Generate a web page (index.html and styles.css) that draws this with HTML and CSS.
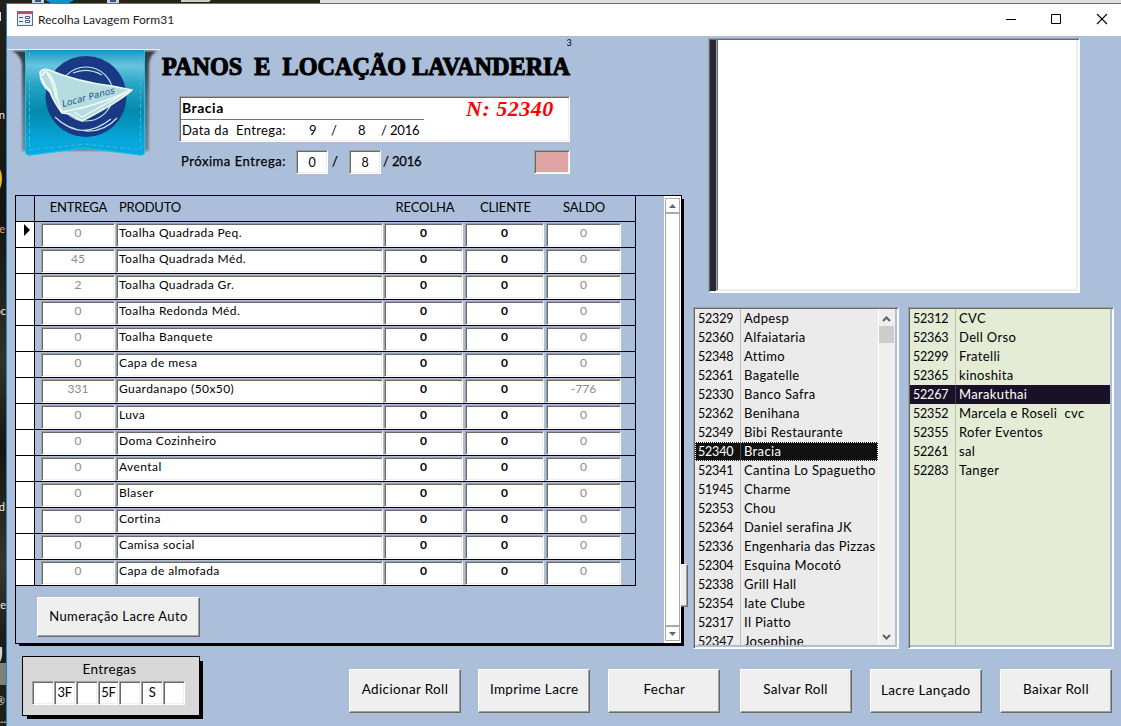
FILE: index.html
```
<!DOCTYPE html>
<html lang="pt-BR">
<head>
<meta charset="utf-8">
<title>Recolha Lavagem Form31</title>
<link rel="stylesheet" href="styles.css">
</head>
<body>
<div class="desktop">
  <svg class="desk-top" width="1121" height="3" viewBox="0 0 1121 3"><path d="M320 0H1121V3H320z" fill="#dedede"/><path d="M32 0h12v3H32zM107 0h12v3h-12z" fill="#c9d3df"/><path d="M35 0h6v2h-6zM110 0h6v2h-6z" fill="#2a5691"/><path d="M45 0h29l-5 3H51z" fill="#0f93cb"/><path d="M181 0h30l-2 2h-28z" fill="#ccc"/></svg>
  <svg class="desk-left" width="6" height="723" viewBox="0 0 6 723"><path d="M0 9h1v9H0z" fill="#c9efd9"/><path d="M0 166q4 9 0 20z" fill="#e9bb28"/><path d="M0 644h2q1 10-2 15z" fill="#c8d2dc"/><path d="M0 660h6v22H0z" fill="#7d8179"/></svg>
  <div class="desk-labels"><span>n</span><span>e</span><span>oc</span><span>d</span><span>ce</span><span>®</span><span>...</span></div>
  <div class="window">
    <header class="titlebar">
      <svg class="form-icon" width="16" height="16" viewBox="0 0 16 16"><rect x=".5" y=".5" width="15" height="14" fill="#e9edf7" stroke="#526a9c"/><path d="M0 0h16v3H0z" fill="#b0526e"/><path d="M2 6.500h4M2 10.500h4" stroke="#46588a"/><path d="M8.500 5.500h4v2h-4zM8.500 9.500h4v2h-4z" fill="#fff" stroke="#46588a"/></svg>
      <h1 class="caption">Recolha Lavagem Form31</h1>
      <svg class="controls" width="105" height="12" viewBox="0 0 105 12" fill="none" stroke="#000"><path d="M1 6.500h10M46.500 1.500h9v9h-9z"/><path d="M92 1l10 10M102 1L92 11" stroke-width="1.100"/></svg>
    </header>
    <main class="client">
      <div class="upper">
        <section class="left">
          <div class="head">
            <svg class="logo" width="153" height="112" viewBox="7 48 153 112">
              <defs>
                <linearGradient id="ribbon" x1="0" y1="0" x2="0" y2="1"><stop offset="0" stop-color="#1597c2"/><stop offset=".15" stop-color="#67c5df"/><stop offset=".32" stop-color="#27a6c6"/><stop offset=".58" stop-color="#0489ac"/><stop offset=".85" stop-color="#06a6da"/><stop offset="1" stop-color="#05a9e2"/></linearGradient>
                <linearGradient id="shade" x1="0" y1="0" x2="0" y2="1"><stop offset="0" stop-color="#34373d"/><stop offset=".5" stop-color="#5f6a7b"/><stop offset="1" stop-color="#77859c"/></linearGradient>
                <filter id="soft" x="-10%" y="-10%" width="120%" height="120%"><feGaussianBlur stdDeviation="1.300"/></filter>
              </defs>
              <path d="M11 51H157Q150 54 149 64V151H22V64Q20 53 11 51z" fill="url(#shade)" filter="url(#soft)"/>
              <path d="M7 49.500H160" stroke="#e6edf3"/>
              <path d="M25 50H145V152Q144 156 139 155L85 148 31 155Q26 156 25 152z" fill="url(#ribbon)"/>
              <path d="M25.500 50V152Q27 156 31 155L85 148 139 155Q144 156 144.500 152V50" fill="none" stroke="#0cc8ea"/>
              <path d="M29.500 52V150L85 144 140.500 150V52" fill="none" stroke="#55bfd8" stroke-width=".8" stroke-dasharray="4 3"/>
              <circle cx="86" cy="96.500" r="40.500" fill="#193985"/>
              <g fill="none" stroke="#c5e4ea" stroke-width="1.200"><circle cx="86" cy="94" r="27"/><path d="M73 73Q87 67 102 75M55 117Q68 130 86 131T117 118M61 122Q84 140 111 119"/></g>
              <path d="M40 72Q43 68 49 70 78 82 112 86L132 90Q119 102 82 121L70 114 62 113Q54 102 50 92 40 84 40 72z" fill="#b5dddf" stroke="#f0fafa" stroke-width="1.700" stroke-linejoin="round"/>
              <path d="M42 76Q45 68 50 75 56 83 57 98L62 112Q98 106 131 90L82 117 74 112M42 78Q45 87 51 91M47 73Q53 82 56 98" fill="none" stroke="#f0fafa" stroke-width="1.400"/>
              <text x="63" y="107" transform="rotate(-15 63 107)" class="logo-name" textLength="54" lengthAdjust="spacingAndGlyphs">Locar Panos</text>
            </svg>
            <div class="ident">
              <div class="mini">3</div>
              <svg class="brand" width="412" height="32" viewBox="0 0 412 32"><text x="2" y="27" textLength="408" lengthAdjust="spacingAndGlyphs" xml:space="preserve">PANOS  E  LOCAÇÃO LAVANDERIA</text></svg>
              <div class="customer sunken">
                <div class="who"><b class="name">Bracia</b><div class="date"><span class="lbl">Data da&nbsp; Entrega:</span><span class="day">9</span><span class="sl">/</span><span class="month">8</span><span class="year">/ 2016</span></div></div>
                <div class="number">N: 52340</div>
              </div>
              <div class="next"><span class="next-lbl">Próxima Entrega:</span><span class="inp sunken">0</span><span class="next-sl">/</span><span class="inp sunken">8</span><span class="next-year">/ 2016</span><span class="flag sunken"></span></div>
            </div>
          </div>
          <div class="subform">
            <div class="sub-main">
              <div class="grid">
                <div class="row labels"><i></i><span>ENTREGA</span><span class="l">PRODUTO</span><span>RECOLHA</span><span>CLIENTE</span><span>SALDO</span></div>
                <div class="row"><i><svg width="6" height="12" viewBox="0 0 6 12"><path d="M0 0l6 6-6 6z"/></svg></i><span>0</span><span>Toalha Quadrada Peq.</span><span>0</span><span>0</span><span>0</span></div>
                <div class="row"><i></i><span>45</span><span>Toalha Quadrada Méd.</span><span>0</span><span>0</span><span>0</span></div>
                <div class="row"><i></i><span>2</span><span>Toalha Quadrada Gr.</span><span>0</span><span>0</span><span>0</span></div>
                <div class="row"><i></i><span>0</span><span>Toalha Redonda Méd.</span><span>0</span><span>0</span><span>0</span></div>
                <div class="row"><i></i><span>0</span><span>Toalha Banquete</span><span>0</span><span>0</span><span>0</span></div>
                <div class="row"><i></i><span>0</span><span>Capa de mesa</span><span>0</span><span>0</span><span>0</span></div>
                <div class="row"><i></i><span>331</span><span>Guardanapo (50x50)</span><span>0</span><span>0</span><span>-776</span></div>
                <div class="row"><i></i><span>0</span><span>Luva</span><span>0</span><span>0</span><span>0</span></div>
                <div class="row"><i></i><span>0</span><span>Doma Cozinheiro</span><span>0</span><span>0</span><span>0</span></div>
                <div class="row"><i></i><span>0</span><span>Avental</span><span>0</span><span>0</span><span>0</span></div>
                <div class="row"><i></i><span>0</span><span>Blaser</span><span>0</span><span>0</span><span>0</span></div>
                <div class="row"><i></i><span>0</span><span>Cortina</span><span>0</span><span>0</span><span>0</span></div>
                <div class="row"><i></i><span>0</span><span>Camisa social</span><span>0</span><span>0</span><span>0</span></div>
                <div class="row"><i></i><span>0</span><span>Capa de almofada</span><span>0</span><span>0</span><span>0</span></div>
              </div>
              <button class="btn auto">Numeração Lacre Auto</button>
            </div>
            <div class="scroll"><div class="arrow"><svg width="7" height="4" viewBox="0 0 7 4"><path d="M0 4L3.500 0 7 4z"/></svg></div><div class="track"></div><div class="arrow"><svg width="7" height="4" viewBox="0 0 7 4"><path d="M0 0L3.500 4 7 0z"/></svg></div></div>
            <div class="tab"></div>
          </div>
        </section>
        <section class="right">
          <div class="memo sunken"><div class="memo-bar"></div><div class="memo-text sunken"></div></div>
          <div class="lists">
            <div class="list sunken">
              <div class="items">
                <div><span>52329</span><span>Adpesp</span></div><div><span>52360</span><span>Alfaiataria</span></div><div><span>52348</span><span>Attimo</span></div><div><span>52361</span><span>Bagatelle</span></div><div><span>52330</span><span>Banco Safra</span></div><div><span>52362</span><span>Benihana</span></div><div><span>52349</span><span>Bibi Restaurante</span></div><div class="sel focus"><span>52340</span><span>Bracia</span></div><div><span>52341</span><span>Cantina Lo Spaguetho</span></div><div><span>51945</span><span>Charme</span></div><div><span>52353</span><span>Chou</span></div><div><span>52364</span><span>Daniel serafina JK</span></div><div><span>52336</span><span>Engenharia das Pizzas</span></div><div><span>52304</span><span>Esquina Mocotó</span></div><div><span>52338</span><span>Grill Hall</span></div><div><span>52354</span><span>Iate Clube</span></div><div><span>52317</span><span>Il Piatto</span></div><div><span>52347</span><span>Josephine</span></div>
              </div>
              <div class="list-scroll"><svg width="9" height="6" viewBox="0 0 9 6"><path d="M1 5l3.500-3.500L8 5"/></svg><div class="thumb"></div><svg class="down" width="9" height="6" viewBox="0 0 9 6"><path d="M1 1l3.500 3.500L8 1"/></svg></div>
            </div>
            <div class="list green sunken">
              <div class="items">
                <div><span>52312</span><span>CVC</span></div><div><span>52363</span><span>Dell Orso</span></div><div><span>52299</span><span>Fratelli</span></div><div><span>52365</span><span>kinoshita</span></div><div class="sel"><span>52267</span><span>Marakuthai</span></div><div><span>52352</span><span>Marcela e Roseli&nbsp; cvc</span></div><div><span>52355</span><span>Rofer Eventos</span></div><div><span>52261</span><span>sal</span></div><div><span>52283</span><span>Tanger</span></div><div class="rest"><span></span><span></span></div>
              </div>
            </div>
          </div>
        </section>
      </div>
      <footer class="bottom">
        <div class="deliveries"><div class="del-title">Entregas</div><div class="days"><span></span><span>3F</span><span></span><span>5F</span><span></span><span>S</span><span></span></div></div>
        <nav class="actions"><button class="btn">Adicionar Roll</button><button class="btn">Imprime Lacre</button><button class="btn">Fechar</button><button class="btn">Salvar Roll</button><button class="btn low">Lacre Lançado</button><button class="btn">Baixar Roll</button></nav>
      </footer>
    </main>
  </div>
</div>
</body>
</html>
```
FILE: styles.css
```
* { box-sizing: border-box; }
body { margin: 0; width: 1121px; height: 726px; overflow: hidden; font: 13px/19px Lato, "Liberation Sans", sans-serif; font-variant-ligatures: none; letter-spacing: .35px; color: #000; }
svg { display: block; flex: none; }
.desktop { position: relative; width: 1121px; height: 726px; padding: 3px 0 0 6px; background: linear-gradient(#23231b, #15140f 30%, #30332a 50%, #17140f 62%, #39362d 78%, #1d1c17 88%, #22201b); }
.desk-top { position: absolute; left: 0; top: 0; }
.desk-left { position: absolute; left: 0; top: 3px; }
.desk-labels { position: absolute; left: 0; top: 0; width: 6px; height: 726px; overflow: hidden; color: #eee; font-size: 11px; line-height: 14px; letter-spacing: 0; }
.desk-labels span { position: absolute; right: 1px; }
.desk-labels span:nth-child(1) { top: 108px; }
.desk-labels span:nth-child(2) { top: 222px; color: #e79d72; }
.desk-labels span:nth-child(3) { top: 304px; right: 0; }
.desk-labels span:nth-child(4) { top: 500px; }
.desk-labels span:nth-child(5) { top: 598px; right: 0; }
.desk-labels span:nth-child(6) { top: 694px; }
.desk-labels span:nth-child(7) { top: 712px; right: 0; }
.window { display: flex; flex-direction: column; height: 723px; border: solid #2583c6; border-width: 1px 0 0 1px; background: #acbfda; }
.titlebar { display: flex; align-items: center; height: 32px; padding: 0 10px; background: #fff; }
.form-icon { margin-top: -3px; }
.caption { margin: -1px auto 0 5px; font-size: 12px; font-weight: 400; letter-spacing: .05px; color: #222; }
.controls { margin: -2px 1px 0 0; }
.client { display: flex; flex-direction: column; height: 690px; }
.upper { display: flex; height: 612px; }
.left { width: 686px; padding-left: 8px; }
.head { display: flex; height: 159px; margin-left: -8px; padding-top: 3px; }
.logo { margin-top: 9px; }
.logo-name { font: italic 9px "DejaVu Sans", sans-serif; fill: #25508c; letter-spacing: 0; }
.ident { width: 412px; }
.mini { height: 9px; padding-right: 0; text-align: right; font-size: 9px; line-height: 8px; }
.brand text { font: bold 25px "Liberation Serif", serif; letter-spacing: 0; stroke: #000; stroke-width: 1.100px; }
.sunken { border: 1px solid; border-color: #a0a0a0 #fff #fff #a0a0a0; box-shadow: inset 1px 1px #696969, inset -1px -1px #eee; background: #fff; }
.customer { display: flex; height: 46px; width: 391px; margin: 16px 0 0 19px; }
.who { width: 244px; padding: 0 0 0 2px; }
.name { display: block; height: 22px; font-size: 14px; line-height: 22px; letter-spacing: .5px; }
.date { display: flex; height: 21px; margin-left: -1px; padding-left: 1px; border: solid #777; border-width: 1px 0 0; line-height: 21px; }
.date span { white-space: nowrap; }
.lbl { width: 127px; }
.day { width: 22px; }
.sl { width: 27px; }
.month { width: 23px; }
.year { letter-spacing: -.15px; }
.number { width: 145px; padding-left: 42px; font: italic bold 22px/24px "Liberation Serif", serif; letter-spacing: .5px; color: #f00; white-space: nowrap; }
.next { display: flex; height: 24px; width: 391px; margin: 8px 0 0 19px; line-height: 22px; letter-spacing: 0; -webkit-text-stroke: .25px; }
.next span { white-space: nowrap; }
.next-lbl { width: 117px; padding-left: 2px; letter-spacing: .55px; }
.inp { width: 32px; text-align: center; line-height: 23px; font-size: 12.500px; -webkit-text-stroke: 0; }
.next-sl { width: 21px; padding-left: 4px; }
.next-year { width: 153px; padding-left: 2px; letter-spacing: -.15px; }
.flag { width: 36px; background: #dfa5a5; }
.subform { position: relative; display: flex; width: 667px; height: 449px; border: 1px solid #000; box-shadow: 3px 3px 0 -1px #000; }
.sub-main { width: 648px; }
.grid { width: 620px; border-right: 1px solid #000; }
.row { display: grid; grid-template-columns: 19px 75px 267px 80px 81px 76px; height: 26px; border-bottom: 1px solid #000; font-size: 12px; line-height: 17px; letter-spacing: 0; }
.row i { height: 25px; border-right: 1px solid #000; background: #fff; }
.row i svg { margin: 2px 0 0 8px; }
.row span { height: 24px; margin-top: 1px; border: 1px solid; border-color: #a0a0a0 #fff #fff #a0a0a0; box-shadow: inset 1px 1px #696969, inset -1px -1px #eee; background: #fff; text-align: center; white-space: nowrap; }
.row:not(.labels) span:nth-child(2) { margin-left: 6px; width: 74px; color: #8b8b8b; }
.row:not(.labels) span:nth-child(3) { margin-left: 6px; width: 267px; padding-left: 2px; text-align: left; letter-spacing: .42px; }
.row:not(.labels) span:nth-child(4) { margin-left: 7px; width: 79px; font-weight: 700; }
.row:not(.labels) span:nth-child(5) { margin-left: 8px; width: 79px; font-weight: 700; }
.row:not(.labels) span:nth-child(6) { margin-left: 8px; width: 75px; color: #8b8b8b; }
.row.labels { font-size: 13px; line-height: 20px; letter-spacing: -.2px; }
.row.labels i { background: none; }
.row.labels span { border: 0; box-shadow: none; background: none; margin: 1px -6px 0 6px; }
.row.labels span:nth-child(n+4) { margin: 1px -8px 0 8px; letter-spacing: -.1px; }
.row.labels .l { text-align: left; padding-left: 3px; letter-spacing: -.2px; }
.btn { display: block; width: 112px; height: 44px; margin: 0; padding: 0 0 3px; border: 1px solid; border-color: #fff #696969 #696969 #fff; box-shadow: inset -1px -1px #a0a0a0; background: #efefef; font: inherit; font-variant-ligatures: none; font-size: 13.500px; letter-spacing: .35px; color: #000; white-space: nowrap; }
.btn.auto { width: 163px; height: 40px; margin: 11px 0 0 21px; padding-bottom: 1px; font-size: 13px; letter-spacing: .4px; }
.scroll { display: flex; flex-direction: column; width: 17px; padding: 2px 1px; background: #fff; }
.arrow { display: flex; align-items: center; justify-content: center; height: 15px; border: 1px solid #a9a9a9; }
.arrow svg { fill: #666; }
.track { flex: 1; border: 1px solid #a9a9a9; }
.tab { position: absolute; left: 665px; top: 368px; width: 7px; height: 43px; border: solid; border-width: 1px 1px 1px 0; border-color: #fff #696969 #696969; box-shadow: inset -1px -1px #a0a0a0; background: #efefef; }
.right { width: 428px; padding-top: 2px; }
.memo { display: flex; width: 372px; height: 255px; margin-left: 15px; padding: 1px; box-shadow: inset 1px 1px #696969, inset -1px -1px #fff; }
.memo-bar { width: 6px; background: #262735; }
.memo-text { flex: 1; box-shadow: inset 1px 0 #696969, inset -1px -1px #eee; border-width: 0 1px 1px; border-right-color: #eee; border-bottom-color: #eee; }
.lists { display: flex; gap: 9px; padding-top: 14px; }
.list { display: flex; width: 206px; height: 342px; padding: 1px 2px 3px 1px; background: #acbfda; box-shadow: inset 1px 1px #696969, inset -1px -1px #fff; }
.items { width: 183px; overflow: hidden; background: #ebebeb; display: flex; flex-direction: column; }
.items > div { display: flex; flex: none; height: 19px; line-height: 19px; }
.items span { white-space: pre; }
.items span:first-child { width: 46px; padding-left: 3px; border-right: 1px solid #bbb; font-size: 12.500px; letter-spacing: -.2px; }
.items span + span { padding-left: 3px; }
.items .sel { color: #fff; background: #111; }
.items .sel span:first-child { border-color: #444; }
.items .focus { outline: 1px dotted #fff; outline-offset: -1px; }
.green .items { width: 200px; background: #e4ecd6; }
.green .sel { background: #191127; }
.green .items .rest { flex: 1; }
.list-scroll { display: flex; flex-direction: column; align-items: center; width: 17px; padding: 7px 2px 5px 0; border-left: 1px solid #fff; background: #efefef; }
.list-scroll path { fill: none; stroke: #606060; stroke-width: 2; }
.thumb { width: 15px; height: 17px; margin: 4px 0 auto; background: #cdcdcd; }
.bottom { display: flex; height: 78px; padding: 8px 0 0 15px; }
.deliveries { width: 178px; height: 60px; border: 1px solid #000; background: #d8d8d8; box-shadow: 4px 4px 0 -1px #000; }
.del-title { height: 24px; padding: 1px 3px 0 0; text-align: center; line-height: 22px; font-size: 13.500px; }
.days { display: flex; width: 153px; height: 24px; margin-left: 9px; letter-spacing: -.2px; }
.days span { flex: 1 1 0; border: 1px solid; border-color: #a0a0a0 #fff #fff #a0a0a0; box-shadow: inset 1px 1px #696969, inset -1px -1px #eee; background: #fff; text-align: center; line-height: 21px; }
.actions { display: grid; grid-template-columns: repeat(6, 112px); align-content: start; gap: 18.200px; margin: 13px 0 0 149px; }
.actions .btn:nth-child(2) { margin-left: -1px; }
.actions .btn:nth-child(3) { margin-left: -1px; }
.btn.low { padding-bottom: 1px; }
```
